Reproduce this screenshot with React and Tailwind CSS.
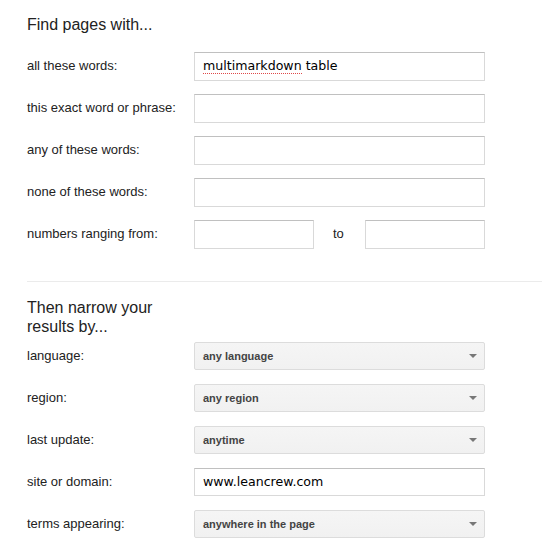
const findRows = [
  { label: 'all these words:', value: 'multimarkdown table' },
  { label: 'this exact word or phrase:', value: '' },
  { label: 'any of these words:', value: '' },
  { label: 'none of these words:', value: '' },
]

const narrowRows = [
  { label: 'language:', select: 'any language' },
  { label: 'region:', select: 'any region' },
  { label: 'last update:', select: 'anytime' },
  { label: 'site or domain:', value: 'www.leancrew.com' },
  { label: 'terms appearing:', select: 'anywhere in the page' },
]

function TextBox({ children, className = '' }) {
  return (
    <div
      className={`h-[29px] flex items-center px-[8px] bg-white border border-[#d9d9d9] border-t-[#c0c0c0] text-[12.6px] text-black font-['DejaVu_Sans',sans-serif] ${className}`}
    >
      {children}
    </div>
  )
}

function SelectBox({ children }) {
  return (
    <div className="w-[291px] h-[28px] flex items-center justify-between pl-[8px] pr-[7px] rounded-[2px] border border-[#dcdcdc] bg-gradient-to-b from-[#f5f5f5] to-[#f1f1f1] text-[11px] font-bold text-[#444]">
      <span>{children}</span>
      <span className="w-0 h-0 border-l-[4px] border-r-[4px] border-t-[4px] border-l-transparent border-r-transparent border-t-[#777]" />
    </div>
  )
}

function Row({ label, children }) {
  return (
    <div className="flex items-center h-[28px]">
      <div className="w-[167px] text-[13px] text-[#222]">{label}</div>
      {children}
    </div>
  )
}

export default function App() {
  return (
    <div className="w-[542px] h-[546px] bg-white font-['Liberation_Sans',Arial,sans-serif] overflow-hidden">
      <div className="pl-[27px] pt-[15px]">
        <h2 className="text-[16px] leading-[19px] text-[#222]">Find pages with...</h2>

        <div className="mt-[18px] flex flex-col gap-[14px]">
          {findRows.map((row) => (
            <Row key={row.label} label={row.label}>
              <TextBox className="w-[291px]">
                {row.value === 'multimarkdown table' ? (
                  <>
                    <span className="leading-[15px] border-b border-dotted border-[#e04848]">multimarkdown</span>
                    <span>&nbsp;table</span>
                  </>
                ) : (
                  row.value
                )}
              </TextBox>
            </Row>
          ))}
          <Row label="numbers ranging from:">
            <TextBox className="w-[120px]" />
            <span className="w-[51px] pl-[19px] text-[13px] text-[#222]">to</span>
            <TextBox className="w-[120px]" />
          </Row>
        </div>

        <div className="mt-[33px] border-t border-[#ebebeb]" />

        <h2 className="mt-[16px] w-[160px] text-[16px] leading-[19px] text-[#222]">Then narrow your results by...</h2>

        <div className="mt-[6px] flex flex-col gap-[14px]">
          {narrowRows.map((row) => (
            <Row key={row.label} label={row.label}>
              {row.select ? (
                <SelectBox>{row.select}</SelectBox>
              ) : (
                <TextBox className="w-[291px] !h-[28px]">{row.value}</TextBox>
              )}
            </Row>
          ))}
        </div>
      </div>
    </div>
  )
}
